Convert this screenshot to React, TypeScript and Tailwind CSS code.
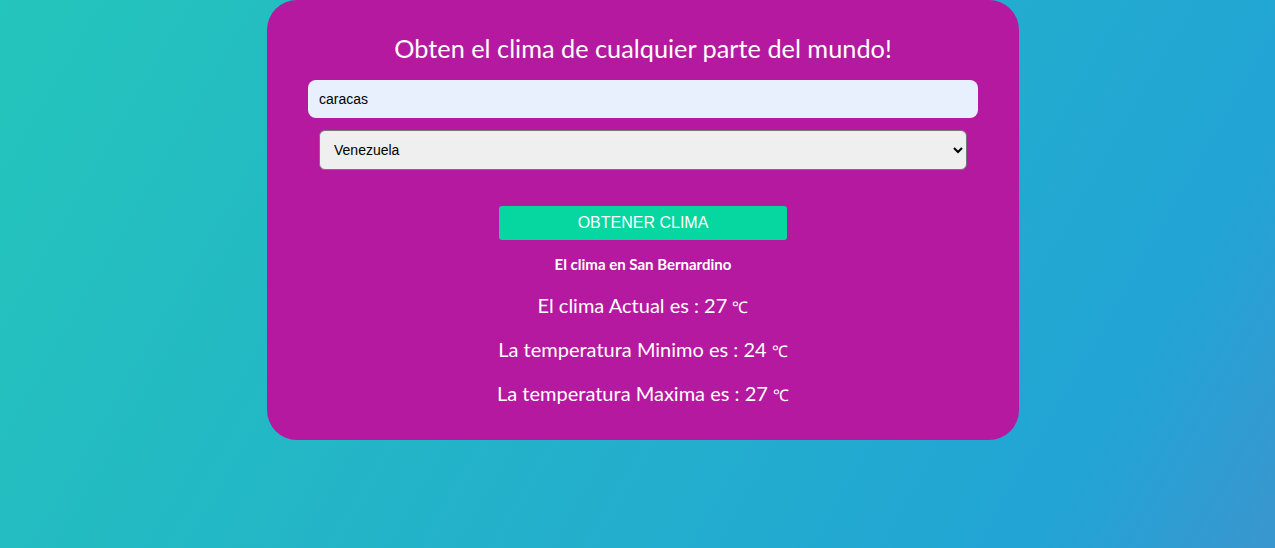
import { useState } from 'react';

export default function App() {
  const [city, setCity] = useState('caracas');
  const [country, setCountry] = useState('VE');

  return (
    <div className="min-h-screen w-full bg-[linear-gradient(120deg,#24c5bb_0%,#23b3c9_45%,#22a4d5_85%,#3a96cf_100%)] flex justify-center pl-[11px] font-['Lato',sans-serif]">
      <div className="w-[752px] h-[440px] bg-[#b5199f] rounded-[30px] px-[41px] pt-[30px] text-white flex flex-col items-center">
        <h1 className="text-[25.3px] leading-[37px] mb-[13px]">Obten el clima de cualquier parte del mundo!</h1>

        <input
          value={city}
          onChange={(e) => setCity(e.target.value)}
          className="w-full h-[38px] rounded-[8px] bg-[#e8f0fe] text-black px-[11px] text-[14px] font-['Liberation_Sans',Arial,sans-serif] outline-none"
        />

        <select
          value={country}
          onChange={(e) => setCountry(e.target.value)}
          className="mt-[12px] w-[648px] h-[40px] rounded-[6px] border border-[#767676] bg-[#efefef] text-black pl-[10px] pr-[6px] text-[14px] font-['Liberation_Sans',Arial,sans-serif]"
        >
          <option value="VE">Venezuela</option>
          <option value="AR">Argentina</option>
          <option value="CO">Colombia</option>
          <option value="MX">Mexico</option>
        </select>

        <button className="mt-[36px] w-[288px] h-[34px] rounded-[3px] bg-[#06d6a0] text-white text-[16px] font-['Liberation_Sans',Arial,sans-serif]">
          OBTENER CLIMA
        </button>

        <p className="mt-[14px] text-[15px] font-bold leading-[20px]">El clima en San Bernardino</p>
        <p className="mt-[19px] text-[20px] leading-[24px]">El clima Actual es : 27 <span className="text-[16px] leading-[20px]">℃</span></p>
        <p className="mt-[20px] text-[20px] leading-[24px]">La temperatura Minimo es : 24 <span className="text-[16px] leading-[20px]">℃</span></p>
        <p className="mt-[20px] text-[20px] leading-[24px]">La temperatura Maxima es : 27 <span className="text-[16px] leading-[20px]">℃</span></p>
      </div>
    </div>
  );
}
